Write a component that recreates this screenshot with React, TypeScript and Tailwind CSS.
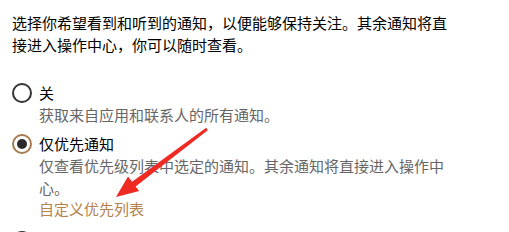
import React from "react";

const font = { fontFamily: '"Noto Sans CJK SC", "Noto Sans", sans-serif' };

interface OptionProps {
  label: string;
  desc: string;
  selected?: boolean;
  link?: string;
}

const Radio: React.FC<{ selected?: boolean }> = ({ selected }) =>
  selected ? (
    <span className="flex h-[20px] w-[20px] shrink-0 items-center justify-center rounded-full border-2 border-[#a67c4e]">
      <span className="h-[10px] w-[10px] rounded-full bg-[#2b2b2b]" />
    </span>
  ) : (
    <span className="h-[20px] w-[20px] shrink-0 rounded-full border-2 border-[#333333]" />
  );

const Option: React.FC<OptionProps & { className?: string }> = ({
  label,
  desc,
  selected,
  link,
  className,
}) => (
  <div className={`flex gap-[7px] ${className ?? ""}`}>
    <Radio selected={selected} />
    <div className="flex flex-col">
      <span className="text-[15px] leading-[20px] text-black">{label}</span>
      <p className="mt-[1px] text-[15px] leading-[22px] text-[#666666]">{desc}</p>
      {link && (
        <a className="text-[15px] leading-[20px] text-[#b5824b]">{link}</a>
      )}
    </div>
  </div>
);

export default function App() {
  return (
    <div
      className="relative h-[232px] w-[509px] overflow-hidden bg-white pl-[12px] pt-[12px]"
      style={font}
    >
      <div className="w-[443px]">
        <p className="text-[15px] leading-[22px] text-black">
          选择你希望看到和听到的通知，以便能够保持关注。其余通知将直接进入操作中心，你可以随时查看。
        </p>
        <Option
          className="mt-[27px]"
          label="关"
          desc="获取来自应用和联系人的所有通知。"
        />
        <Option
          className="mt-[8px]"
          label="仅优先通知"
          desc="仅查看优先级列表中选定的通知。其余通知将直接进入操作中心。"
          link="自定义优先列表"
          selected
        />
        <Option
          className="mt-[12px]"
          label="仅闹钟"
          desc="隐藏所有通知，闹钟除外。"
        />
      </div>
      <svg
        className="pointer-events-none absolute left-0 top-0"
        width="509"
        height="232"
        viewBox="0 0 509 232"
      >
        <polygon
          fill="#ee2a22"
          points="206.2,127.8 132.1,181.8 128,176.6 116,197 139.2,191 135.6,186.4 207.8,130.2"
        />
      </svg>
    </div>
  );
}
